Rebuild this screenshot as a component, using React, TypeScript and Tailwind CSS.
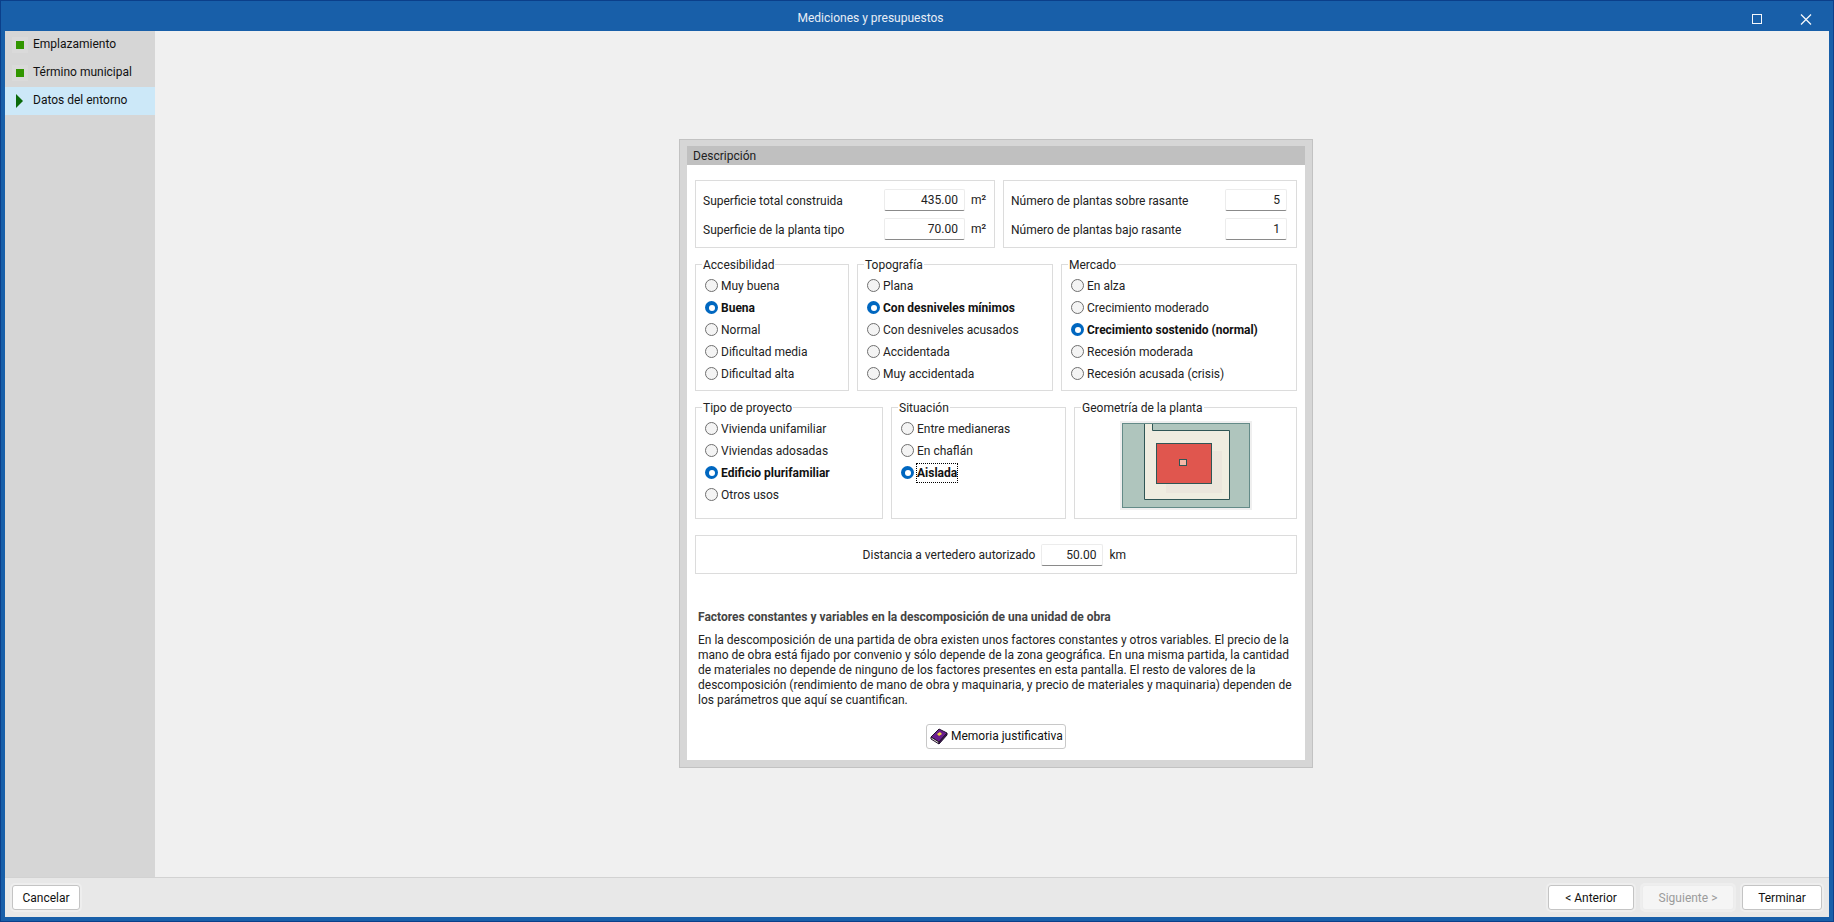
import { ReactNode } from "react"

const FONT = "font-['Roboto','Noto_Sans',sans-serif]"

const steps = [
  { label: "Emplazamiento", done: true },
  { label: "Término municipal", done: true },
  { label: "Datos del entorno", done: false },
]

const paragraph = [
  "En la descomposición de una partida de obra existen unos factores constantes y otros variables. El precio de la",
  "mano de obra está fijado por convenio y sólo depende de la zona geográfica. En una misma partida, la cantidad",
  "de materiales no depende de ninguno de los factores presentes en esta pantalla. El resto de valores de la",
  "descomposición (rendimiento de mano de obra y maquinaria, y precio de materiales y maquinaria) dependen de",
  "los parámetros que aquí se cuantifican.",
]

function Radio({ label, checked, focus }: { label: string; checked?: boolean; focus?: boolean }) {
  return (
    <div className="h-[22px] flex items-center gap-[3px] pl-[9px]">
      {checked ? (
        <span className="w-[13px] h-[13px] rounded-full bg-[#0067c0] flex items-center justify-center shrink-0">
          <span className="w-[6px] h-[6px] rounded-full bg-white" />
        </span>
      ) : (
        <span className="w-[13px] h-[13px] rounded-full border border-[#6f6f6f] bg-[#f4f4f4] shrink-0" />
      )}
      <span
        className={`whitespace-nowrap ${checked ? "font-bold text-[#111]" : "text-[#222]"} ${
          focus ? "outline-1 outline-dotted outline-black" : ""
        }`}
      >
        {label}
      </span>
    </div>
  )
}

function Group({ title, className, children }: { title: string; className: string; children: ReactNode }) {
  return (
    <fieldset className={`border border-[#dcdcdc] pl-0 ${className}`}>
      <legend className="ml-[6px] px-px h-4 leading-4 text-[#222]">{title}</legend>
      {children}
    </fieldset>
  )
}

function NumberField({ value, className }: { value: string; className: string }) {
  return (
    <div
      className={`h-[22px] bg-white border border-[#ececec] border-b-[#8a8a8a] rounded-[2px] text-right pr-[6px] leading-[20px] text-[#222] shrink-0 ${className}`}
    >
      {value}
    </div>
  )
}

function FieldRow({ label, value, unit, wide }: { label: string; value: string; unit?: boolean; wide?: boolean }) {
  return (
    <div className="h-[22px] flex items-center justify-between">
      <span className="text-[#222] whitespace-nowrap pt-[2px]">{label}</span>
      <div className="flex items-center">
        <NumberField value={value} className={wide ? "w-[81px]" : "w-[62px]"} />
        {unit && (
          <span className="w-[29px] pl-[6px] text-[#222]">
            m<sup className="text-[8px] font-bold">2</sup>
          </span>
        )}
      </div>
    </div>
  )
}

function FooterButton({ label, width, disabled }: { label: string; width: string; disabled?: boolean }) {
  return (
    <button
      className={`h-[25px] rounded-[3px] border text-center ring-2 ring-[#eeeeee] ${width} ${
        disabled ? "bg-[#f5f5f5] border-[#ececec] text-[#9b9b9b]" : "bg-white border-[#c4c4c4] text-[#111]"
      }`}
    >
      {label}
    </button>
  )
}

function BookIcon() {
  return (
    <svg width="18" height="18" viewBox="0 0 18 18" className="shrink-0">
      <path d="M1 10 L9 2 L17 6 L9 15 Z" fill="#6a1f8f" stroke="#22102e" strokeWidth="1" />
      <path d="M1 10 L9 15 L9 17 L1 12 Z" fill="#e8e4d8" stroke="#22102e" strokeWidth="1" />
      <path d="M9 15 L17 6 L17 8 L9 17 Z" fill="#3c1455" stroke="#22102e" strokeWidth="1" />
      <path d="M7 7 L10 5 L12 7 L9 9 Z" fill="#f2d53c" />
    </svg>
  )
}

function PlantDrawing() {
  return (
    <svg width="132" height="89" viewBox="0 0 132 89" className="block">
      <rect x="0" y="0" width="132" height="89" fill="#efefef" />
      <rect x="2.5" y="2.5" width="127" height="84" fill="#afc5bd" stroke="#648b88" />
      <path d="M24.5 3 H32.5 V9.5 H109.5 V78.5 H24.5 Z" fill="#efede0" />
      <path d="M32.5 3 V9.5 H109.5 V78.5 H24.5 V3" fill="none" stroke="#2f5655" />
      <rect x="46" y="30" width="56" height="42" fill="#ebe6dc" />
      <rect x="36.5" y="22.5" width="55" height="40" fill="#e0564e" stroke="#2f5655" />
      <rect x="59.5" y="38.5" width="7" height="6" fill="#f4b8a8" stroke="#2f5655" />
    </svg>
  )
}

export default function App() {
  return (
    <div className={`w-[1834px] h-[922px] overflow-hidden bg-[#185fa9] border border-[#0b3f8a] flex flex-col text-[12px] ${FONT}`}>
      {/* Title bar */}
      <div className="h-[30px] flex items-center shrink-0 text-white">
        <div className="flex-1 text-center pr-[3px] pt-[3px] text-[#e8eef6]">Mediciones y presupuestos</div>
        <svg width="90" height="30" viewBox="0 0 90 30" fill="none" stroke="#f4f7fb">
          <rect x="9.5" y="13.5" width="9" height="9" strokeWidth="1" />
          <path d="M58 13.5 L68 23.5 M68 13.5 L58 23.5" strokeWidth="1.3" />
        </svg>
      </div>

      {/* Body */}
      <div className="flex-1 min-h-0 mx-[4px] flex flex-col">
        <div className="flex-1 min-h-0 flex bg-[#f0f0f0]">
          <aside className="w-[150px] bg-[#d6d6d6] shrink-0">
            {steps.map((step) => (
              <div
                key={step.label}
                className={`h-[28px] flex items-center text-[#111] ${step.done ? "" : "bg-[#cce8f8]"}`}
              >
                <span className="w-[28px] flex justify-center shrink-0 pl-[2px]">
                  {step.done ? (
                    <span className="w-[16px] h-[16px] bg-[#dadada] flex items-center justify-center">
                      <span className="w-[8px] h-[8px] bg-[#329600]" />
                    </span>
                  ) : (
                    <svg width="8" height="14" viewBox="0 0 8 14">
                      <path d="M0 0 L7 7 L0 14 Z" fill="#0a6a0a" />
                    </svg>
                  )}
                </span>
                <span className="pb-[2px]">{step.label}</span>
              </div>
            ))}
          </aside>

          <main className="flex-1 flex items-center justify-center pl-[8px] pb-[2px]">
            {/* Dialog panel */}
            <div className="w-[634px] h-[629px] bg-[#d6d6d6] border border-[#c2c2c2] p-[7px] pt-[6px] flex flex-col">
              <div className="h-[19px] bg-[#c0c0c0] pl-[6px] leading-[20px] text-[#222] shrink-0">Descripción</div>
              <div className="flex-1 bg-white pt-[15px] px-[8px] flex flex-col">
                <div className="flex gap-[8px]">
                  <div className="w-[300px] h-[68px] border border-[#dcdcdc] pl-[7px] pt-[8px] flex flex-col gap-[7px]">
                    <FieldRow label="Superficie total construida" value="435.00" unit wide />
                    <FieldRow label="Superficie de la planta tipo" value="70.00" unit wide />
                  </div>
                  <div className="flex-1 h-[68px] border border-[#dcdcdc] pl-[7px] pr-[9px] pt-[8px] flex flex-col gap-[7px]">
                    <FieldRow label="Número de plantas sobre rasante" value="5" />
                    <FieldRow label="Número de plantas bajo rasante" value="1" />
                  </div>
                </div>

                <div className="flex gap-[8px] mt-[9px] h-[134px]">
                  <Group title="Accesibilidad" className="w-[154px]">
                    <div className="pt-[2px]">
                      <Radio label="Muy buena" />
                      <Radio label="Buena" checked />
                      <Radio label="Normal" />
                      <Radio label="Dificultad media" />
                      <Radio label="Dificultad alta" />
                    </div>
                  </Group>
                  <Group title="Topografía" className="w-[196px]">
                    <div className="pt-[2px]">
                      <Radio label="Plana" />
                      <Radio label="Con desniveles mínimos" checked />
                      <Radio label="Con desniveles acusados" />
                      <Radio label="Accidentada" />
                      <Radio label="Muy accidentada" />
                    </div>
                  </Group>
                  <Group title="Mercado" className="flex-1">
                    <div className="pt-[2px]">
                      <Radio label="En alza" />
                      <Radio label="Crecimiento moderado" />
                      <Radio label="Crecimiento sostenido (normal)" checked />
                      <Radio label="Recesión moderada" />
                      <Radio label="Recesión acusada (crisis)" />
                    </div>
                  </Group>
                </div>

                <div className="flex gap-[8px] mt-[9px] h-[119px]">
                  <Group title="Tipo de proyecto" className="w-[188px]">
                    <div className="pt-[2px]">
                      <Radio label="Vivienda unifamiliar" />
                      <Radio label="Viviendas adosadas" />
                      <Radio label="Edificio plurifamiliar" checked />
                      <Radio label="Otros usos" />
                    </div>
                  </Group>
                  <Group title="Situación" className="w-[175px]">
                    <div className="pt-[2px]">
                      <Radio label="Entre medianeras" />
                      <Radio label="En chaflán" />
                      <Radio label="Aislada" checked focus />
                    </div>
                  </Group>
                  <Group title="Geometría de la planta" className="flex-1">
                    <div className="flex justify-center pt-[5px]">
                      <PlantDrawing />
                    </div>
                  </Group>
                </div>

                <div className="mt-[16px] h-[39px] border border-[#dcdcdc] flex items-center justify-center gap-[6px] pl-[4px] pt-[2px] text-[#222]">
                  <span>Distancia a vertedero autorizado</span>
                  <NumberField value="50.00" className="w-[62px]" />
                  <span className="w-[24px]">km</span>
                </div>

                <h2 className="mt-[35px] pl-[3px] font-bold text-[#444] leading-[16px]">
                  Factores constantes y variables en la descomposición de una unidad de obra
                </h2>
                <div className="mt-[8px] pl-[3px] leading-[15px] text-[#222]">
                  {paragraph.map((line) => (
                    <div key={line} className="whitespace-nowrap">
                      {line}
                    </div>
                  ))}
                </div>

                <div className="flex justify-center mt-[16px]">
                  <button className="w-[140px] h-[25px] rounded-[3px] border border-[#c8c8c8] bg-white flex items-center gap-[3px] pl-[3px] text-[#111] whitespace-nowrap">
                    <BookIcon />
                    <span>Memoria justificativa</span>
                  </button>
                </div>
              </div>
            </div>
          </main>
        </div>

        {/* Wizard footer */}
        <div className="h-[40px] shrink-0 bg-[#e8e8e8] border-t border-[#d2d2d2] flex items-center justify-between pl-[7px] pr-[7px]">
          <FooterButton label="Cancelar" width="w-[68px]" />
          <div className="flex gap-[8px]">
            <FooterButton label="< Anterior" width="w-[86px]" />
            <FooterButton label="Siguiente >" width="w-[92px]" disabled />
            <FooterButton label="Terminar" width="w-[80px]" />
          </div>
        </div>
      </div>
      <div className="h-[4px] shrink-0" />
    </div>
  )
}
